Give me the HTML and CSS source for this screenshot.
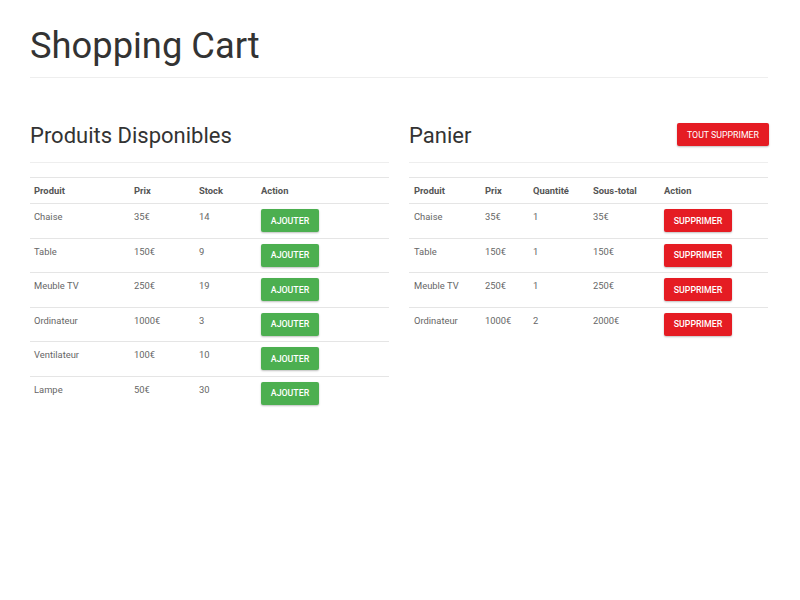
FILE: index.html
```html
<!DOCTYPE html>
<html lang="fr">
<head>
<meta charset="utf-8">
<title>Shopping Cart</title>
<link rel="stylesheet" href="styles.css">
</head>
<body>
<div class="container">
  <div class="page-header"><h1>Shopping Cart</h1></div>
  <div class="row">
    <section class="col">
      <div class="section-header"><h2>Produits Disponibles</h2></div>
      <table class="table products">
        <thead>
          <tr><th>Produit</th><th>Prix</th><th>Stock</th><th>Action</th></tr>
        </thead>
        <tbody>
          <tr><td>Chaise</td><td>35€</td><td>14</td><td><button class="btn btn-success">Ajouter</button></td></tr>
          <tr><td>Table</td><td>150€</td><td>9</td><td><button class="btn btn-success">Ajouter</button></td></tr>
          <tr><td>Meuble TV</td><td>250€</td><td>19</td><td><button class="btn btn-success">Ajouter</button></td></tr>
          <tr><td>Ordinateur</td><td>1000€</td><td>3</td><td><button class="btn btn-success">Ajouter</button></td></tr>
          <tr><td>Ventilateur</td><td>100€</td><td>10</td><td><button class="btn btn-success">Ajouter</button></td></tr>
          <tr><td>Lampe</td><td>50€</td><td>30</td><td><button class="btn btn-success">Ajouter</button></td></tr>
        </tbody>
      </table>
    </section>
    <section class="col">
      <div class="section-header split"><h2>Panier</h2><button class="btn btn-danger btn-clear">Tout supprimer</button></div>
      <table class="table cart">
        <thead>
          <tr><th>Produit</th><th>Prix</th><th>Quantité</th><th>Sous-total</th><th>Action</th></tr>
        </thead>
        <tbody>
          <tr><td>Chaise</td><td>35€</td><td>1</td><td>35€</td><td><button class="btn btn-danger">Supprimer</button></td></tr>
          <tr><td>Table</td><td>150€</td><td>1</td><td>150€</td><td><button class="btn btn-danger">Supprimer</button></td></tr>
          <tr><td>Meuble TV</td><td>250€</td><td>1</td><td>250€</td><td><button class="btn btn-danger">Supprimer</button></td></tr>
          <tr><td>Ordinateur</td><td>1000€</td><td>2</td><td>2000€</td><td><button class="btn btn-danger">Supprimer</button></td></tr>
        </tbody>
      </table>
    </section>
  </div>
</div>
</body>
</html>
```
FILE: styles.css
```css
html, body {
  margin: 0;
  padding: 0;
  background: #fff;
}
body {
  font-family: Roboto, "Liberation Sans", sans-serif;
  color: #333;
}
.container {
  padding: 0 32px 0 30px;
}
.page-header {
  padding-top: 22px;
  padding-bottom: 7px;
  border-bottom: 1px solid #eee;
}
h1 {
  margin: 0;
  font-size: 36.3px;
  font-weight: 400;
  line-height: 48px;
  color: #333;
}
.row {
  display: grid;
  grid-template-columns: 1fr 1fr;
  column-gap: 20px;
  margin-top: 44px;
}
.section-header {
  height: 40px;
  border-bottom: 1px solid #eee;
  margin-bottom: 14px;
  display: flex;
  align-items: flex-start;
}
.section-header.split {
  justify-content: space-between;
}
h2 {
  margin: 0;
  font-size: 22px;
  font-weight: 400;
  line-height: 28px;
  color: #333;
}
.table {
  width: 100%;
  border-collapse: collapse;
  border-top: 1px solid #e5e5e5;
  font-size: 9.4px;
}
.table th {
  text-align: left;
  font-weight: 700;
  color: #555;
  height: 25px;
  padding: 0 4px;
  vertical-align: middle;
  border-bottom: 1px solid #e5e5e5;
}
.table td {
  color: #666;
  padding: 6px 4px 0;
  height: 27.5px;
  vertical-align: top;
  line-height: 14px;
}
.cart th, .cart td {
  padding-left: 5px;
}
.table tbody tr + tr td {
  border-top: 1px solid #e5e5e5;
}
.products th:nth-child(1) { width: 92px; }
.products th:nth-child(2) { width: 57px; }
.products th:nth-child(3) { width: 54px; }
.cart th:nth-child(1) { width: 62px; }
.cart th:nth-child(2) { width: 39px; }
.cart th:nth-child(3) { width: 51px; }
.cart th:nth-child(4) { width: 62px; }
.btn {
  font-family: Roboto, "Liberation Sans", sans-serif;
  border: 0;
  border-radius: 2px;
  color: #fff;
  text-transform: uppercase;
  font-size: 8.8px;
  font-weight: 500;
  height: 23px;
  padding: 0 4px;
  margin-top: -1px;
  box-shadow: 0 1px 2px rgba(0,0,0,0.25);
  cursor: pointer;
}
.btn-success {
  background: #4caf50;
  width: 58px;
}
.btn-danger {
  background: #e51c23;
  width: 68px;
}
.btn-clear {
  width: 92px;
  font-weight: 400;
  margin-top: 1px;
  margin-right: -1px;
}
```
